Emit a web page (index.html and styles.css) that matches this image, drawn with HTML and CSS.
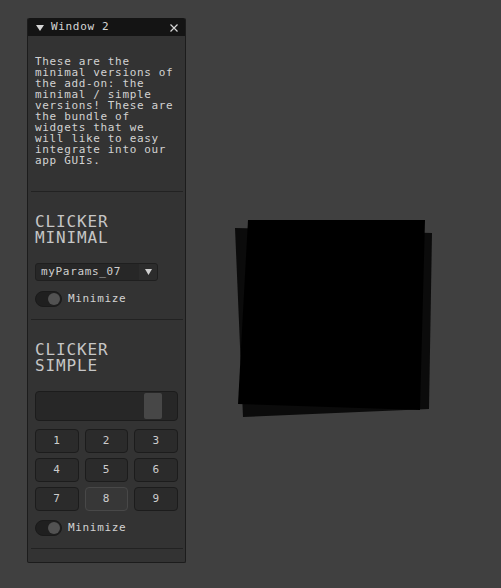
FILE: index.html
```html
<!DOCTYPE html>
<html>
<head>
<meta charset="utf-8">
<link rel="stylesheet" href="styles.css">
</head>
<body>
<svg class="canvas" width="501" height="588" viewBox="0 0 501 588">
  <polygon points="235,228 432,233 429,409 243,417" fill="#0b0b0b"/>
  <polygon points="248,220 425,220 420,410 238,404" fill="#000000"/>
</svg>
<div class="window">
  <div class="titlebar">
    <svg class="collapse" width="8" height="6" viewBox="0 0 8 6"><polygon points="0,0 8,0 4,6" fill="#d6d6d6"/></svg>
    <span class="title">Window 2</span>
    <svg class="close" width="8" height="8" viewBox="0 0 8 8"><path d="M0.5 0.5 L7.5 7.5 M7.5 0.5 L0.5 7.5" stroke="#d6d6d6" stroke-width="1.2"/></svg>
  </div>
  <div class="body">
    <p class="info">These are the<br>minimal versions of<br>the add-on: the<br>minimal / simple<br>versions! These are<br>the bundle of<br>widgets that we<br>will like to easy<br>integrate into our<br>app GUIs.</p>
    <div class="sep sep-first"></div>
    <h2 class="header">CLICKER<br>MINIMAL</h2>
    <div class="combo">
      <span class="combo-label">myParams_07</span>
      <span class="combo-arrow"><svg width="7" height="6" viewBox="0 0 7 6"><polygon points="0,0 7,0 3.5,6" fill="#d0d0d0"/></svg></span>
    </div>
    <div class="toggle-row">
      <span class="toggle"><span class="knob"></span></span>
      <span class="toggle-label">Minimize</span>
    </div>
    <div class="sep"></div>
    <h2 class="header">CLICKER<br>SIMPLE</h2>
    <div class="slider"><span class="grab" style="margin-left:108px"></span></div>
    <div class="grid">
      <div class="btn">1</div>
      <div class="btn">2</div>
      <div class="btn">3</div>
      <div class="btn">4</div>
      <div class="btn">5</div>
      <div class="btn">6</div>
      <div class="btn">7</div>
      <div class="btn hover">8</div>
      <div class="btn">9</div>
    </div>
    <div class="toggle-row toggle-row-2">
      <span class="toggle"><span class="knob"></span></span>
      <span class="toggle-label">Minimize</span>
    </div>
    <div class="sep"></div>
  </div>
</div>
</body>
</html>
```
FILE: styles.css
```css
html, body {
  margin: 0;
  padding: 0;
}
body {
  background: #404040;
  width: 501px;
  height: 588px;
  overflow: hidden;
  position: relative;
  font-family: "DejaVu Sans Mono", "Liberation Mono", monospace;
  font-size: 11px;
  letter-spacing: 0.66px;
  color: #d2d2d2;
}
.canvas {
  position: absolute;
  left: 0;
  top: 0;
}
.window {
  position: relative;
  margin-left: 27px;
  margin-top: 18px;
  width: 157px;
  border: 1px solid #1c1c1c;
  border-top: none;
  background: #333333;
  border-radius: 2px;
}
.titlebar {
  height: 18px;
  background: #141414;
  display: flex;
  align-items: center;
  padding-left: 8px;
  padding-right: 7px;
  border-radius: 2px 2px 0 0;
}
.collapse {
  margin-top: 1px;
}
.title {
  margin-left: 7px;
  line-height: 18px;
  flex: 1;
  color: #d6d6d6;
}
.close {
  margin-top: 1px;
}
.body {
  padding: 20px 7px 13px 7px;
}
.info {
  margin: 0;
  line-height: 11px;
}
.sep {
  height: 1px;
  background: #222222;
  margin: 12px -5px 0 -4px;
}
.sep-first {
  margin-top: 25px;
}
.header {
  margin: 22px 0 0 0;
  font-weight: normal;
  font-size: 16px;
  line-height: 16px;
  letter-spacing: 0.87px;
  color: #c6c6c6;
}
.combo {
  margin-top: 17px;
  width: 121px;
  height: 16px;
  border: 1px solid #1f1f1f;
  border-radius: 3px;
  background: #272727;
  display: flex;
  align-items: center;
  overflow: hidden;
}
.combo-label {
  flex: 1;
  padding-left: 5px;
  line-height: 16px;
  color: #cfcfcf;
}
.combo-arrow {
  width: 18px;
  height: 16px;
  background: #2c2c2c;
  display: flex;
  align-items: center;
  justify-content: center;
}
.toggle-row {
  margin-top: 10px;
  display: flex;
  align-items: center;
  gap: 6px;
  height: 16px;
}
.toggle-row-2 {
  margin-top: 9px;
}
.toggle {
  width: 24px;
  height: 14px;
  border: 1px solid #1a1a1a;
  border-radius: 8px;
  background: #1f1f1f;
  display: flex;
  align-items: center;
  justify-content: flex-end;
  padding-right: 1px;
  box-sizing: content-box;
}
.knob {
  width: 12px;
  height: 12px;
  border-radius: 50%;
  background: #525252;
}
.toggle-label {
  line-height: 16px;
  color: #d2d2d2;
}
.slider {
  margin-top: 17px;
  height: 28px;
  border: 1px solid #1c1c1c;
  border-radius: 4px;
  background: #272727;
  display: flex;
  align-items: center;
}
.grab {
  width: 18px;
  height: 26px;
  border-radius: 2px;
  background: #474747;
}
.grid {
  margin-top: 8px;
  display: grid;
  grid-template-columns: repeat(3, 1fr);
  column-gap: 6px;
  row-gap: 5px;
}
.btn {
  height: 22px;
  border: 1px solid #1c1c1c;
  border-radius: 4px;
  background: #2b2b2b;
  display: flex;
  align-items: center;
  justify-content: center;
  line-height: 22px;
  color: #cdcdcd;
}
.btn.hover {
  background: #373737;
  border-color: #484848;
}
```
